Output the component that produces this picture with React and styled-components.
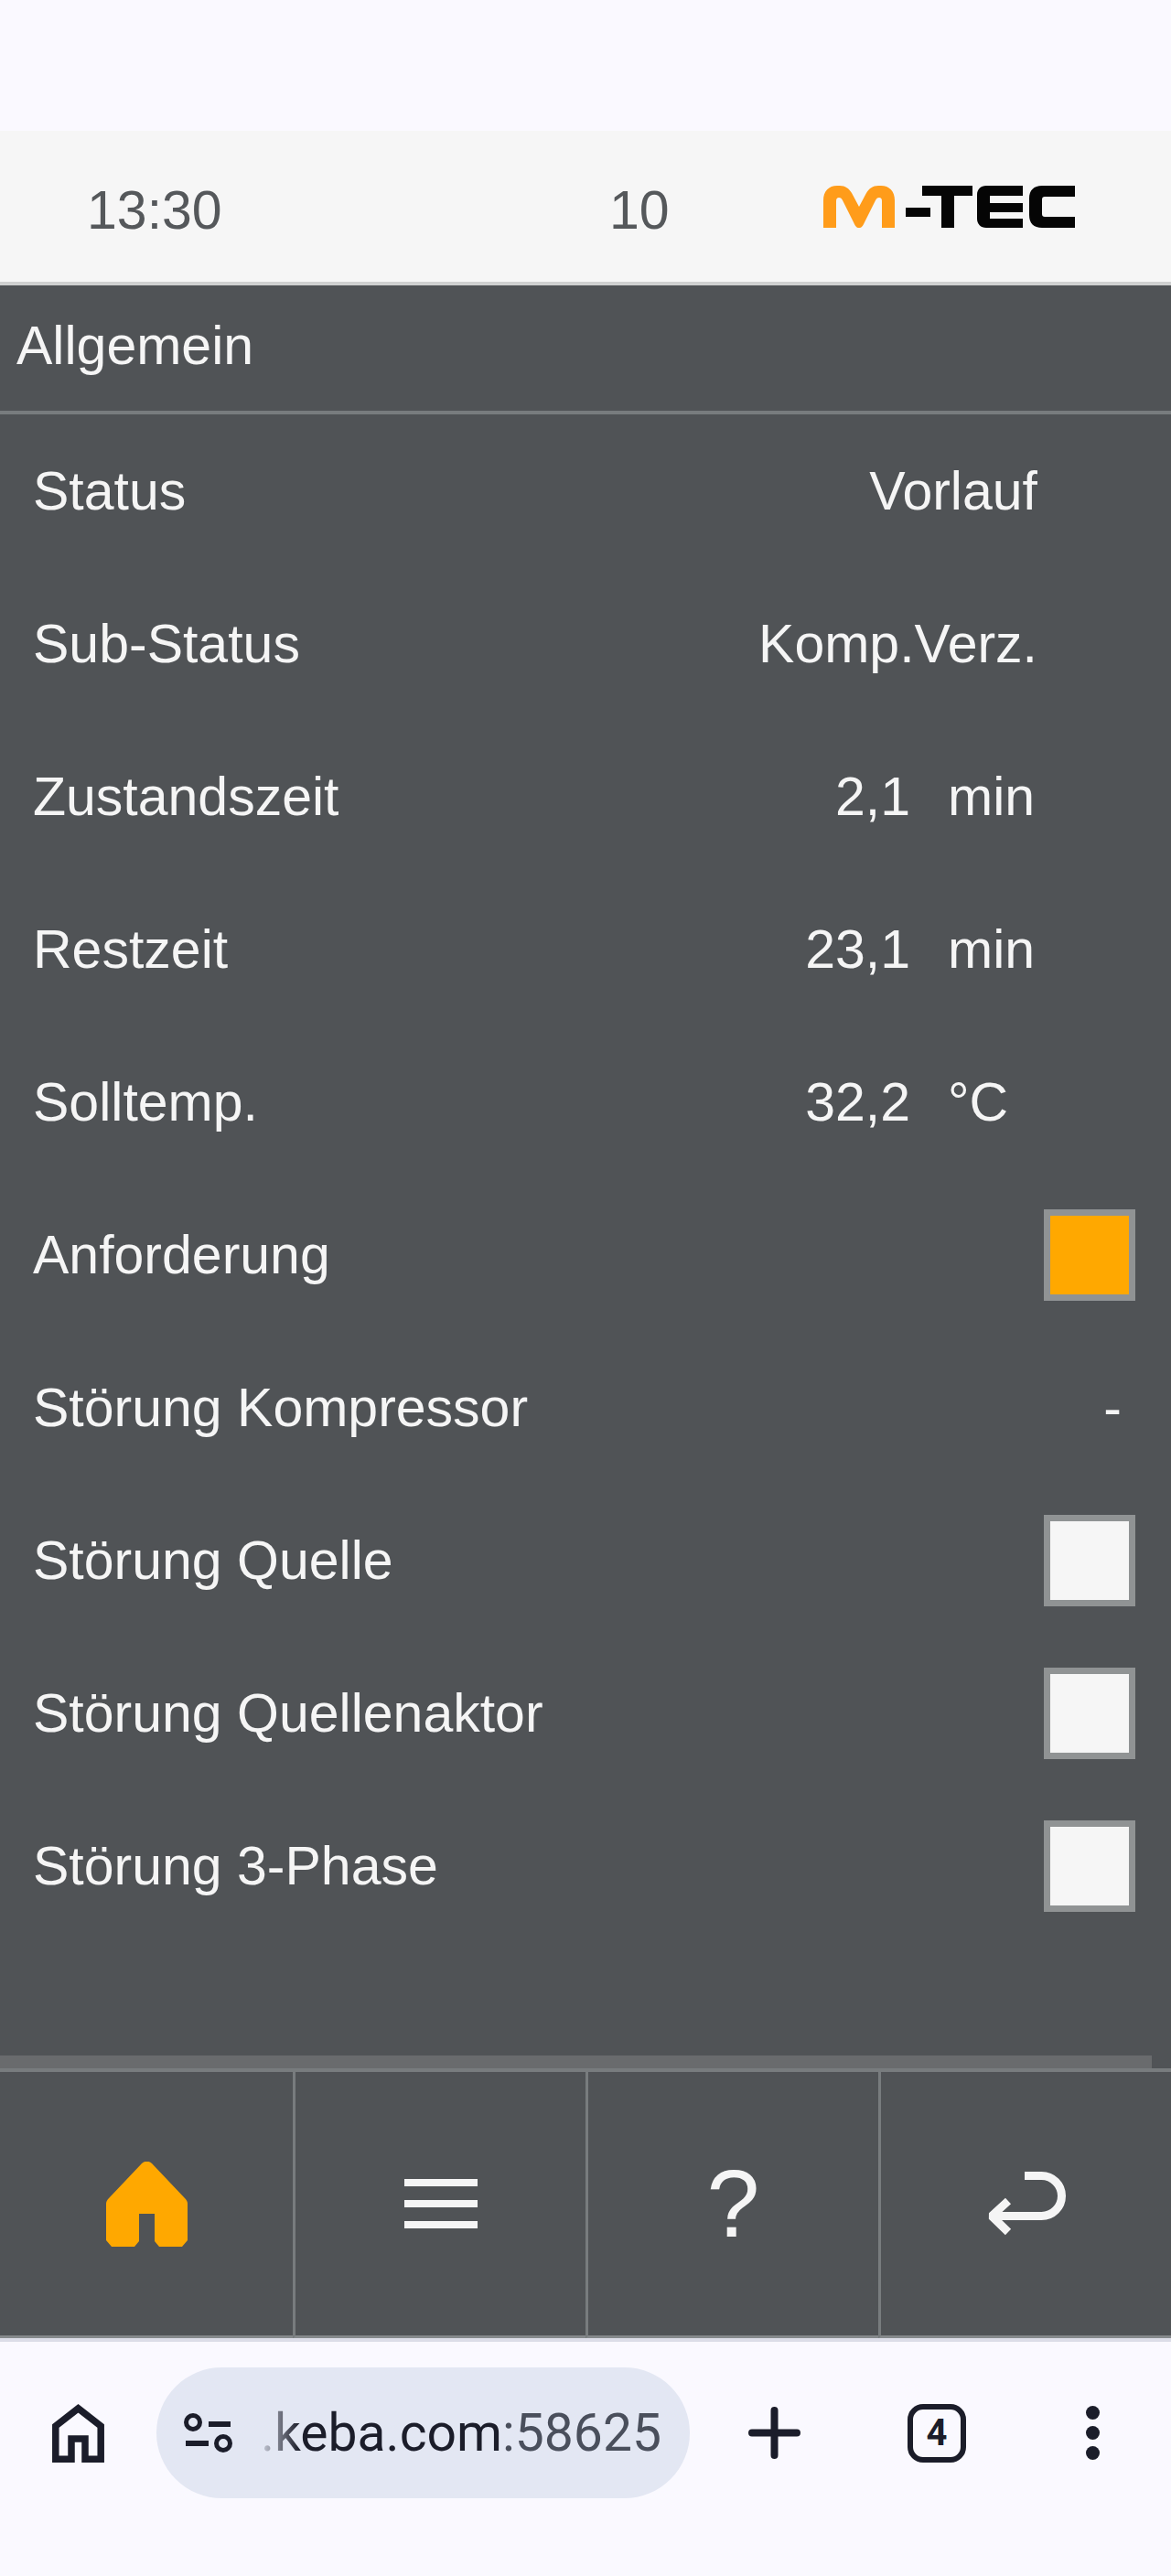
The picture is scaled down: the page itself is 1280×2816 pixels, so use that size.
import React from "react";
import styled, { createGlobalStyle } from "styled-components";

const GlobalStyle = createGlobalStyle`
  html, body {
    margin: 0;
    padding: 0;
    background: #faf9ff;
  }
  * {
    box-sizing: border-box;
  }
`;

const Page = styled.div`
  display: flex;
  flex-direction: column;
  width: 1280px;
  height: 2816px;
  overflow: hidden;
  background: #faf9ff;
  font-family: "Liberation Sans", Arial, sans-serif;
`;

const TopSpace = styled.div`
  height: 143px;
  flex-shrink: 0;
`;

const Header = styled.header`
  display: grid;
  grid-template-columns: 571px 234px auto;
  align-items: center;
  height: 169px;
  padding-left: 95px;
  background: #f6f6f6;
  border-bottom: 4px solid #cfd0d0;
  color: #55585b;
  font-size: 59px;
  flex-shrink: 0;
`;

const HeaderText = styled.span`
  padding-top: 8px;
`;

const Logo = styled.svg`
  display: block;
  width: 275px;
  height: 46px;
`;

const Main = styled.main`
  display: flex;
  flex-direction: column;
  flex: 1;
  background: #505356;
  color: #f5f5f5;
  font-size: 59px;
`;

const SectionTitle = styled.div`
  display: flex;
  align-items: center;
  height: 141px;
  padding: 0 0 6px 18px;
  border-bottom: 4px solid #787c7e;
`;

const Rows = styled.div`
  flex: 1;
`;

const Row = styled.div`
  display: grid;
  grid-template-columns: 1fr 260px 98px 107px;
  align-items: center;
  height: 167px;
  padding: 0 39px 0 36px;
`;

const Value = styled.span`
  text-align: right;
  padding-right: 41px;
`;

const Unit = styled.span`
  grid-column: 3;
`;

const WideValue = styled.span`
  grid-column: 2 / span 2;
  text-align: right;
  white-space: nowrap;
`;

const Dash = styled.span`
  grid-column: 4;
  text-align: right;
  padding-right: 15px;
`;

const Lamp = styled.span`
  grid-column: 4;
  justify-self: end;
  width: 100px;
  height: 100px;
  border: 7px solid #909394;
  background: ${(p) => (p.$on ? "#ffa800" : "#f6f6f6")};
`;

const Scrollbar = styled.div`
  width: 1259px;
  height: 14px;
  background: #696b6d;
`;

const Nav = styled.nav`
  display: grid;
  grid-template-columns: repeat(4, 1fr);
  height: 299px;
  background: #505356;
  border-top: 4px solid #787c7e;
  flex-shrink: 0;
`;

const NavCell = styled.div`
  display: flex;
  align-items: center;
  justify-content: center;
  border-left: ${(p) => (p.$first ? "none" : "3px solid #787c7e")};
  border-bottom: 4px solid #85898b;
  margin-bottom: 3px;
  color: #f5f5f5;
`;

const NavShade = styled.div`
  height: 4px;
  margin-top: -4px;
  background: #dcdde8;
  flex-shrink: 0;
`;

const HelpMark = styled.span`
  font-size: 104px;
  line-height: 1;
`;

const BrowserBar = styled.div`
  display: flex;
  align-items: center;
  height: 143px;
  margin-top: 28px;
  margin-bottom: 85px;
  padding-left: 57px;
  flex-shrink: 0;
  color: #1b1d2a;
`;

const AddressPill = styled.div`
  display: flex;
  align-items: center;
  gap: 31px;
  width: 583px;
  height: 143px;
  margin: 0 64px 0 57px;
  padding-left: 30px;
  border-radius: 72px;
  background: #e3e7f3;
`;

const Address = styled.span`
  font-family: Roboto, "Liberation Sans", sans-serif;
  font-size: 57px;
  white-space: nowrap;
  color: #1b1d2a;
  -webkit-mask-image: linear-gradient(to right, rgba(0, 0, 0, 0.12) 0, #000 42px);
  mask-image: linear-gradient(to right, rgba(0, 0, 0, 0.12) 0, #000 42px);
`;

const Port = styled.span`
  color: #4a4f5c;
`;

const TabCount = styled.div`
  display: flex;
  align-items: center;
  justify-content: center;
  width: 64px;
  height: 64px;
  margin-left: 117px;
  border: 6px solid #1b1d2a;
  border-radius: 17px;
  font-family: Roboto, "Liberation Sans", sans-serif;
  font-size: 40px;
  font-weight: 700;
`;

const MenuDots = styled.div`
  display: flex;
  flex-direction: column;
  gap: 7px;
  margin-left: 131px;

  span {
    width: 15px;
    height: 15px;
    border-radius: 50%;
    background: #1b1d2a;
  }
`;

const BarIcon = styled.svg`
  display: block;
  flex-shrink: 0;
`;

const rows = [
  { label: "Status", wide: "Vorlauf" },
  { label: "Sub-Status", wide: "Komp.Verz." },
  { label: "Zustandszeit", value: "2,1", unit: "min" },
  { label: "Restzeit", value: "23,1", unit: "min" },
  { label: "Solltemp.", value: "32,2", unit: "°C" },
  { label: "Anforderung", lamp: "on" },
  { label: "Störung Kompressor", dash: true },
  { label: "Störung Quelle", lamp: "off" },
  { label: "Störung Quellenaktor", lamp: "off" },
  { label: "Störung 3-Phase", lamp: "off" },
];

const MtecLogo = () => (
  <Logo viewBox="0 0 275 46">
    <path
      fill="#ff9c1a"
      d="M0 46V16C0 6 6 0 15 0h3c6 0 10 3 13 8l8 15 8-15c3-5 7-8 13-8h3c9 0 15 6 15 16v30H64V17c0-3-1-4-3-4s-3 1-4 3L45 40c-2 4-3 6-6 6s-4-2-6-6L21 16c-1-2-2-3-4-3s-3 1-3 4v29z"
    />
    <path
      fill="#050505"
      d="M90 24h27v10H90zM108 0h55v11h-20v35h-14V11h-21zM168 10c0-6 4-10 10-10h40v11h-36v8h36v10h-36v7h36v10h-40c-6 0-10-4-10-10zM225 14c0-9 5-14 14-14h36v12h-33c-2 0-3 1-3 3v16c0 2 1 3 3 3h33v12h-36c-9 0-14-5-14-14z"
    />
  </Logo>
);

const HomeFilled = () => (
  <svg width="89" height="93" viewBox="0 0 89 93">
    <path
      fill="#ffa800"
      d="M39 2c3-3 8-3 11 0l36 38c2 2 3 4 3 6v40l-6 7H58l-5-6V57H36v30l-5 6H6l-6-7V46c0-2 1-4 3-6z"
    />
  </svg>
);

const Hamburger = () => (
  <svg width="80" height="54" viewBox="0 0 80 54">
    <path fill="#f5f5f5" d="M0 0h80v8H0zM0 23h80v8H0zM0 46h80v8H0z" />
  </svg>
);

const ReturnArrow = () => (
  <svg width="87" height="70" viewBox="0 0 87 70" fill="none">
    <path stroke="#f5f5f5" strokeWidth="9" d="M42 4.500H60.500a22 22 0 0 1 0 44H6" />
    <path stroke="#f5f5f5" strokeWidth="9" strokeLinejoin="bevel" d="M24 32 6 48.500 24 66" />
  </svg>
);

const BrowserHome = () => (
  <BarIcon width="57" height="64" viewBox="0 0 57 64" fill="none">
    <path
      stroke="#1b1d2a"
      strokeWidth="7.500"
      d="M3.800 60.200V24L28.500 4.800 53.200 24V60.200H36V38H21V60.200Z"
    />
  </BarIcon>
);

const TuneIcon = () => (
  <BarIcon width="53" height="44" viewBox="0 0 53 44" fill="none" stroke="#1b1d2a">
    <circle cx="10" cy="10" r="7.500" strokeWidth="5" />
    <circle cx="43" cy="33" r="7.500" strokeWidth="5" />
    <path strokeWidth="6" d="M27 12h24M2 33h25" />
  </BarIcon>
);

const App = () => {
  return (
    <Page>
      <GlobalStyle />
      <TopSpace />
      <Header>
        <HeaderText>13:30</HeaderText>
        <HeaderText>10</HeaderText>
        <MtecLogo />
      </Header>
      <Main>
        <SectionTitle>Allgemein</SectionTitle>
        <Rows>
          {rows.map((row) => (
            <Row key={row.label}>
              <span>{row.label}</span>
              {row.wide && <WideValue>{row.wide}</WideValue>}
              {row.value && <Value>{row.value}</Value>}
              {row.unit && <Unit>{row.unit}</Unit>}
              {row.dash && <Dash>-</Dash>}
              {row.lamp && <Lamp $on={row.lamp === "on"} />}
            </Row>
          ))}
        </Rows>
        <Scrollbar />
      </Main>
      <Nav>
        <NavCell $first>
          <HomeFilled />
        </NavCell>
        <NavCell>
          <Hamburger />
        </NavCell>
        <NavCell>
          <HelpMark>?</HelpMark>
        </NavCell>
        <NavCell>
          <ReturnArrow />
        </NavCell>
      </Nav>
      <NavShade />
      <BrowserBar>
        <BrowserHome />
        <AddressPill>
          <TuneIcon />
          <Address>
            .keba.com<Port>:58625</Port>
          </Address>
        </AddressPill>
        <BarIcon width="57" height="57" viewBox="0 0 57 57">
          <path stroke="#1b1d2a" strokeWidth="8" strokeLinecap="round" d="M28.500 4v49M4 28.500h49" />
        </BarIcon>
        <TabCount>4</TabCount>
        <MenuDots>
          <span />
          <span />
          <span />
        </MenuDots>
      </BrowserBar>
    </Page>
  );
};

export default App;
